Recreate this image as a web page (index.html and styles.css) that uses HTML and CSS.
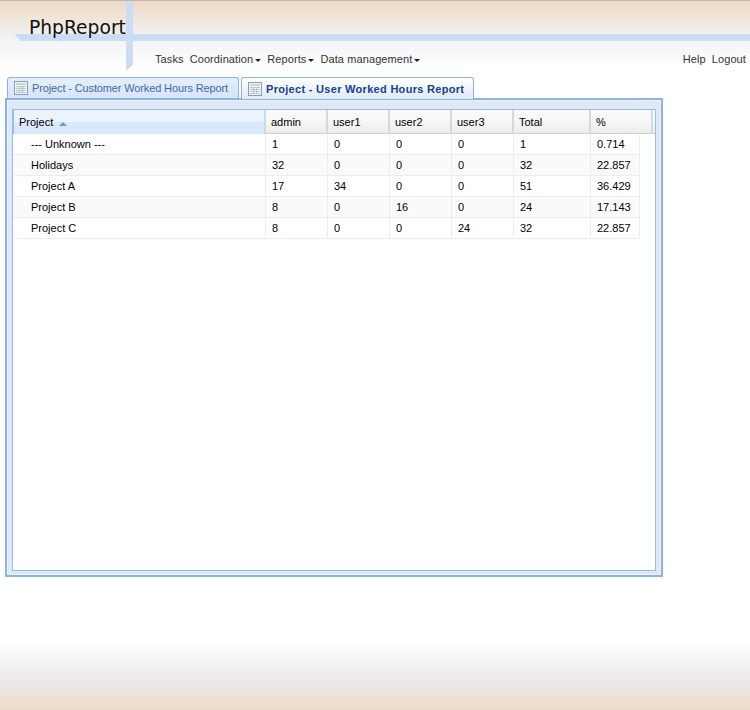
FILE: index.html
```html
<!DOCTYPE html>
<html lang="en">
<head>
    <meta charset="UTF-8">
    <meta name="viewport" content="width=device-width, initial-scale=1.0">
    <title>PhpReport</title>
    <link rel="stylesheet" href="styles.css">
</head>
<body>

    <div class="header">
        <svg class="stripes" width="750" height="72" viewBox="0 0 750 72">
            <path d="M14 34H126V2H133V34H750V41H133V65L126 71V41H21Z" fill="#cbdcf3"/>
        </svg>
        <div class="logo">PhpReport</div>
        <div class="menubar">
            <div class="menu">
                <span>Tasks</span>
                <span class="arrow">Coordination</span>
                <span class="arrow">Reports</span>
                <span class="arrow">Data management</span>
            </div>
            <div class="menu">
                <span>Help</span>
                <span>Logout</span>
            </div>
        </div>
    </div>

    <div class="tabs">
        <div class="tab">
            <svg class="tab-icon" width="14" height="14" viewBox="0 0 14 14">
                <rect x="0.5" y="0.5" width="13" height="13" fill="#f6f8fb" stroke="#7f9fc9"/>
                <path d="M2 2H12V4H2Z" fill="#c9dcb4"/>
                <path d="M2 5.5H12M2 7.5H12M2 9.5H12M2 11.5H12M5.5 5V12M8.5 5V12" stroke="#b9c6d6"/>
            </svg>
            Project - Customer Worked Hours Report
        </div>
        <div class="tab active">
            <svg class="tab-icon" width="14" height="14" viewBox="0 0 14 14">
                <rect x="0.5" y="0.5" width="13" height="13" fill="#f6f8fb" stroke="#7f9fc9"/>
                <path d="M2 2H12V4H2Z" fill="#c9dcb4"/>
                <path d="M2 5.5H12M2 7.5H12M2 9.5H12M2 11.5H12M5.5 5V12M8.5 5V12" stroke="#b9c6d6"/>
            </svg>
            Project - User Worked Hours Report
        </div>
    </div>

    <div class="panel">
        <div class="grid">
            <div class="grid-head">
                <div class="sorted">Project <span class="sort-arrow"></span></div>
                <div>admin</div>
                <div>user1</div>
                <div>user2</div>
                <div>user3</div>
                <div>Total</div>
                <div>%</div>
            </div>
            <div class="row">
                <div class="name">--- Unknown ---</div><div>1</div><div>0</div><div>0</div><div>0</div><div>1</div><div>0.714</div>
            </div>
            <div class="row alt">
                <div class="name">Holidays</div><div>32</div><div>0</div><div>0</div><div>0</div><div>32</div><div>22.857</div>
            </div>
            <div class="row">
                <div class="name">Project A</div><div>17</div><div>34</div><div>0</div><div>0</div><div>51</div><div>36.429</div>
            </div>
            <div class="row alt">
                <div class="name">Project B</div><div>8</div><div>0</div><div>16</div><div>0</div><div>24</div><div>17.143</div>
            </div>
            <div class="row">
                <div class="name">Project C</div><div>8</div><div>0</div><div>0</div><div>24</div><div>32</div><div>22.857</div>
            </div>
        </div>
    </div>

    <div class="footer"></div>

</body>
</html>
```

FILE: styles.css
```css
/* General body styles */
body {
    font-family: "Liberation Sans", Arial, sans-serif;
    font-size: 11px;
    color: #222;
    background-color: #fff;
    margin: 0;
    height: 710px;
    overflow: hidden;
    display: flex;
    flex-direction: column;
}
/* Header with the logo and menus */
.header {
    position: relative;
    height: 77px;
    box-sizing: border-box;
    border-top: 1px solid #bdb9b5;
    background: linear-gradient(#f0d9c5 0, #f0e8e0 22px, #f2f3f5 38px, #fff 68px);
}
.stripes {
    position: absolute;
    left: 0;
    top: -1px;
}
.logo {
    position: relative;
    font-family: "DejaVu Sans", sans-serif;
    font-size: 18.7px;
    line-height: 22px;
    color: #111;
    padding: 16px 0 0 29px;
    height: 33px;
}
.menubar {
    position: relative;
    display: flex;
    justify-content: space-between;
    padding: 2px 4px 0 155px;
    line-height: 14px;
    color: #333;
}
.menu {
    display: flex;
    gap: 6px;
    letter-spacing: 0.1px;
}
.arrow::after {
    content: "";
    display: inline-block;
    border: 3px solid transparent;
    border-top-color: #222;
    border-bottom: 0;
    margin-left: 2px;
    vertical-align: 1px;
}
/* Tabs above the panel */
.tabs {
    display: flex;
    gap: 2px;
    padding-left: 7px;
    height: 21px;
}
.tab {
    box-sizing: border-box;
    width: 232px;
    height: 21px;
    display: flex;
    align-items: center;
    gap: 4px;
    padding-left: 6px;
    white-space: nowrap;
    border: 1px solid #8db2e3;
    border-bottom: 0;
    border-radius: 3px 3px 0 0;
    background: linear-gradient(#e6effb, #d6e4f8);
    color: #416aa3;
    letter-spacing: -0.13px;
}
.tab.active {
    width: 233px;
    height: 22px;
    position: relative;
    background: linear-gradient(#fff, #dfe9f8);
    color: #15428b;
    font-weight: bold;
    letter-spacing: 0.3px;
}
.tab-icon {
    flex: none;
}
/* Report panel */
.panel {
    box-sizing: border-box;
    width: 658px;
    height: 479px;
    margin-left: 5px;
    padding: 9px 5px 4px;
    border: 2px solid #8db2e3;
    background-color: #dfe8f6;
    box-shadow: inset 0 0 0 1px #edf2fb;
}
.grid {
    height: 100%;
    box-sizing: border-box;
    border: 1px solid #99bbe8;
    background-color: #fff;
    color: #000;
}
.grid-head,
.row {
    display: grid;
    grid-template-columns: 253px 62px 62px 62px 62px 77px 49px;
}
.grid-head {
    grid-template-columns: 253px 62px 62px 62px 62px 77px 62px;
    height: 24px;
    background: linear-gradient(#fbfbfb, #f6f6f6 50%, #ececec);
    border-bottom: 1px solid #d0d0d0;
    box-sizing: border-box;
}
.grid-head > div {
    padding-left: 5px;
    line-height: 24px;
    border-right: 2px solid #d8d8d8;
    box-sizing: border-box;
}
.grid-head > .sorted {
    background: linear-gradient(#ebf3fd 50%, #d9e8fb 50%);
    border-left: 1px solid #99bbe8;
    border-right-color: #c9d9ee;
}
.sort-arrow {
    display: inline-block;
    margin-left: 3px;
    border: 4px solid transparent;
    border-top: 0;
    border-bottom: 4px solid #6f97d3;
    vertical-align: 0;
}
.row {
    height: 21px;
    box-sizing: border-box;
    border-bottom: 1px solid #ededed;
    width: 627px;
}
.row.alt {
    background-color: #fafafa;
}
.row > div {
    padding-left: 6px;
    line-height: 20px;
    border-right: 1px solid #ededed;
}
.row > .name {
    padding-left: 18px;
}
/* Faded strip at the bottom of the page */
.footer {
    margin-top: auto;
    height: 70px;
    background: linear-gradient(#fff, #f3f3f5 22px, #ebe9e8 42px, #eedbc8 70px);
}
```
